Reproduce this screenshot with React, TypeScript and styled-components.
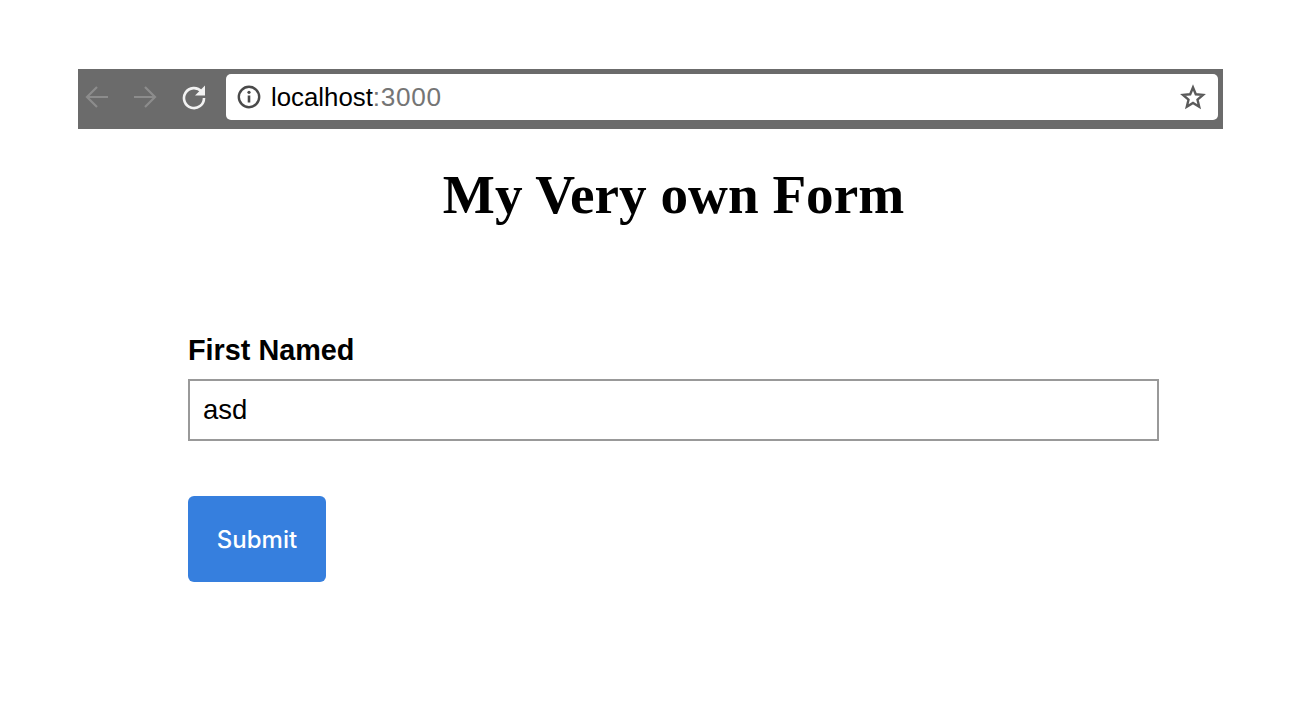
import React from 'react';
import styled, { createGlobalStyle } from 'styled-components';

const GlobalStyle = createGlobalStyle`
  html, body {
    margin: 0;
    padding: 0;
    background: #fff;
  }
`;

const Page = styled.div`
  width: 1300px;
  height: 715px;
  overflow: hidden;
  padding: 69px 77px 0 78px;
  box-sizing: border-box;
  display: flex;
  flex-direction: column;
`;

const BrowserBar = styled.div`
  height: 60px;
  background: #6b6b6b;
  display: flex;
  align-items: flex-start;
  padding: 5px 5px 0 5px;
  box-sizing: border-box;
`;

const NavButtons = styled.div`
  width: 143px;
  height: 46px;
  padding-left: 1px;
  box-sizing: border-box;
  display: flex;
  align-items: center;
  flex-shrink: 0;
`;

const NavIcon = styled.svg<{ $gap?: number }>`
  width: 26px;
  height: 26px;
  margin-right: ${({ $gap }) => $gap ?? 0}px;
  flex-shrink: 0;
`;

const AddressBox = styled.div`
  flex: 1;
  height: 46px;
  background: #fff;
  border-radius: 5px;
  display: flex;
  align-items: center;
  padding: 0 12px 0 11px;
`;

const UrlText = styled.span`
  font-family: 'Liberation Sans', Arial, sans-serif;
  font-size: 25.8px;
  color: #000;
  margin-left: 10px;
  flex: 1;
`;

const Port = styled.span`
  color: #757575;
  font-size: 26.2px;
  letter-spacing: 0.7px;
`;

const Content = styled.main`
  margin-left: 110px;
  width: 971px;
  display: flex;
  flex-direction: column;
`;

const Title = styled.h1`
  font-family: 'Liberation Serif', 'Times New Roman', serif;
  font-weight: 700;
  font-size: 55.2px;
  line-height: 64px;
  text-align: center;
  margin: 34px 0 0;
  color: #000;
`;

const Form = styled.form`
  display: flex;
  flex-direction: column;
  align-items: flex-start;
  margin-top: 107px;
`;

const Label = styled.label`
  font-family: 'Liberation Sans', Arial, sans-serif;
  font-weight: 700;
  font-size: 28.8px;
  line-height: 32px;
  color: #000;
  margin-bottom: 13px;
`;

const TextInput = styled.input`
  width: 100%;
  height: 62px;
  box-sizing: border-box;
  border: 2px solid #999;
  padding: 0 13px;
  font-family: 'Liberation Sans', Arial, sans-serif;
  font-size: 27.5px;
  color: #000;
  outline: none;
  background: #fff;
`;

const SubmitButton = styled.button`
  margin-top: 55px;
  width: 138px;
  height: 86px;
  border: none;
  border-radius: 6px;
  background: #367fde;
  color: #fff;
  font-family: Inter, 'Liberation Sans', Arial, sans-serif;
  font-size: 24px;
  font-weight: 500;
  padding: 0;
`;

const App = () => (
  <>
    <GlobalStyle />
    <Page>
      <BrowserBar>
        <NavButtons>
          <NavIcon $gap={22} viewBox="0 0 26 26" fill="none" stroke="#8c8c8c" strokeWidth="2.2">
            <path d="M24 13H3M13 3L3 13l10 10" />
          </NavIcon>
          <NavIcon $gap={23} viewBox="0 0 26 26" fill="none" stroke="#8c8c8c" strokeWidth="2.2">
            <path d="M2 13h21M13 3l10 10-10 10" />
          </NavIcon>
          <NavIcon viewBox="0 0 26 26" fill="none">
            <path d="M20.500 7.500A10 10 0 1 0 23 14" stroke="#f2f2f2" strokeWidth="2.6" />
            <path d="M24 1.500V11.500H14z" fill="#f2f2f2" />
          </NavIcon>
        </NavButtons>
        <AddressBox>
          <svg width="24" height="24" viewBox="0 0 24 24" fill="none">
            <circle cx="12" cy="12" r="10.2" stroke="#4a4a4a" strokeWidth="2.4" />
            <path d="M12 10.500v7" stroke="#4a4a4a" strokeWidth="2.6" />
            <circle cx="12" cy="7.300" r="1.600" fill="#4a4a4a" />
          </svg>
          <UrlText>
            localhost<Port>:3000</Port>
          </UrlText>
          <svg width="26" height="26" viewBox="0 0 26 26" fill="none">
            <path
              d="M13 3.500l2.800 6.800 7.200.6-5.500 4.800 1.700 7.100L13 19 6.800 22.800l1.700-7.100L3 10.900l7.200-.6z"
              stroke="#5a5a5a"
              strokeWidth="2.400"
              strokeLinejoin="miter"
            />
          </svg>
        </AddressBox>
      </BrowserBar>
      <Content>
        <Title>My Very own Form</Title>
        <Form onSubmit={(e) => e.preventDefault()}>
          <Label htmlFor="first-named">First Named</Label>
          <TextInput id="first-named" defaultValue="asd" />
          <SubmitButton type="submit">Submit</SubmitButton>
        </Form>
      </Content>
    </Page>
  </>
);

export default App;
